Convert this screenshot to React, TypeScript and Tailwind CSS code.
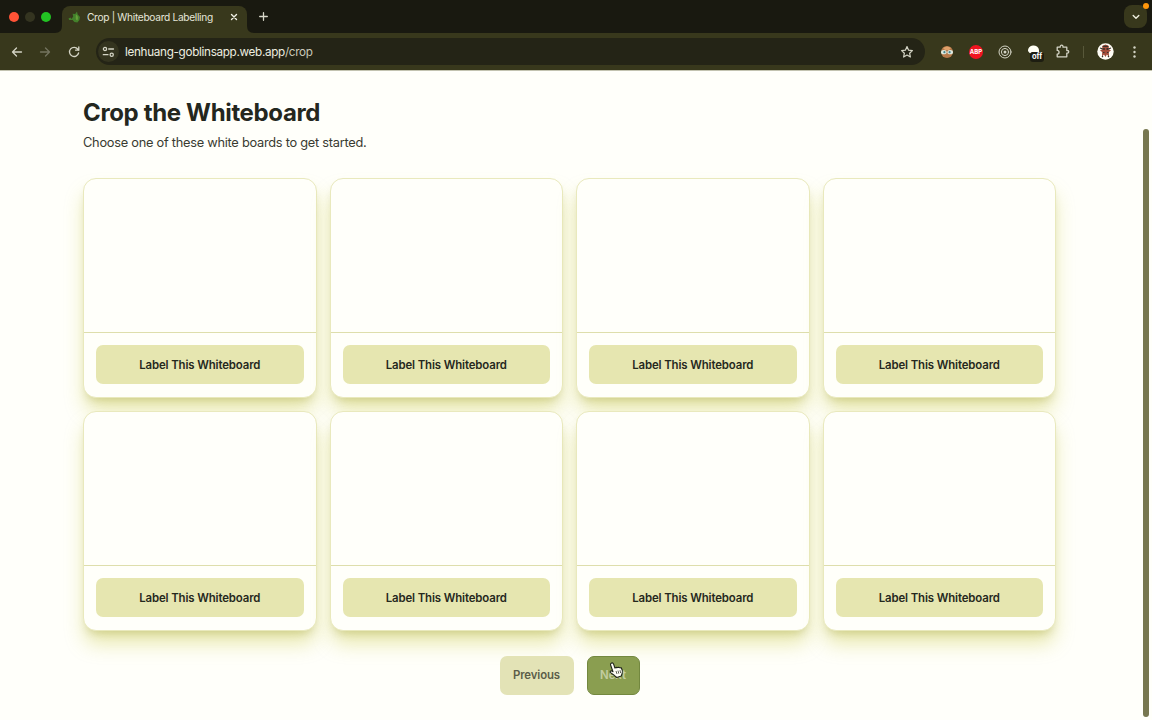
import React from "react";

const iconProps = {
  fill: "none",
  stroke: "currentColor",
  strokeLinecap: "round" as const,
  strokeLinejoin: "round" as const,
};

function TabStrip() {
  return (
    <div className="flex h-[33px] shrink-0 bg-[#191910] pl-[9px]">
      <div className="flex h-[33px] items-center gap-[6px]">
        <span className="size-[10px] rounded-full bg-[#ff5336]" />
        <span className="size-[10px] rounded-full bg-[#343420]" />
        <span className="size-[10px] rounded-full bg-[#22c323]" />
      </div>
      <div className="relative ml-[11px] mt-[6px] flex h-[27px] w-[185px] items-center rounded-t-[8px] bg-[#38381c] pb-[6px] pl-[6px]">
        <svg className="absolute bottom-0 -left-[7px]" width="7" height="7">
          <path d="M7 0V7H0Q7 7 7 0Z" fill="#38381c" />
        </svg>
        <svg className="absolute bottom-0 -right-[7px]" width="7" height="7">
          <path d="M0 0V7H7Q0 7 0 0Z" fill="#38381c" />
        </svg>
        <svg className="shrink-0" width="13" height="12" viewBox="0 0 13 12">
          <path d="M.5 7.5L2.5 6.5L3.5 8L5.2 5.4L4.6 2.8L7.2 3L9 .6L9.6 3.2L12 6L11.4 9L9.4 11.4L6.4 11L4.6 9L1.2 9Z" fill="#43802b" />
          <path d="M8 3.4Q11 5 9.4 9.6Q7 9 8 3.4Z" fill="#66a03a" />
        </svg>
        <span className="ml-[6px] w-[143px] shrink-0 whitespace-nowrap text-[10.2px] leading-[14px] tracking-[-0.32px] text-[#e5e5d9]">
          Crop | Whiteboard Labelling
        </span>
        <svg className="shrink-0 text-[#f0f0e5]" width="8" height="8" viewBox="0 0 8 8" {...iconProps} strokeWidth="1.4">
          <path d="M1.5 1.5L6.5 6.5M6.5 1.5L1.5 6.5" />
        </svg>
      </div>
      <svg className="ml-[12px] mt-[12px] text-[#d8d8ca]" width="9" height="9" viewBox="0 0 9 9" {...iconProps} strokeWidth="1.3">
        <path d="M4.5 .7V8.3M.7 4.5H8.3" />
      </svg>
      <div className="relative ml-auto mr-[5px] mt-[5px] flex size-[23px] items-center justify-center rounded-[8px] bg-[#38381c]">
        <svg width="8" height="6" viewBox="0 0 8 6" {...iconProps} strokeWidth="1.4" className="text-[#eeeede]">
          <path d="M1.2 1.5L4 4.3L6.8 1.5" />
        </svg>
        <span className="absolute -right-[2px] -top-[2px] size-[6px] rounded-full bg-[#ff960b]" />
      </div>
    </div>
  );
}

function Toolbar() {
  return (
    <div className="flex h-[37px] shrink-0 items-center bg-[#38381c] pl-[10px] text-[#d4d4c5] shadow-[0_1px_0_#c3c3b0]">
      <svg width="14" height="14" viewBox="0 0 14 14" {...iconProps} strokeWidth="1.3">
        <path d="M11.5 7H2.5M6.5 3L2.5 7L6.5 11" />
      </svg>
      <svg className="ml-[14px] text-[#74745f]" width="14" height="14" viewBox="0 0 14 14" {...iconProps} strokeWidth="1.3">
        <path d="M2.5 7H11.5M7.5 3L11.5 7L7.5 11" />
      </svg>
      <svg className="ml-[15px]" width="14" height="14" viewBox="0 0 14 14" {...iconProps} strokeWidth="1.3">
        <path d="M11.6 8A4.6 4.6 0 1 1 10.8 4.1L11.8 5.2M11.8 2V5.2H8.6" />
      </svg>
      <div className="ml-[15px] flex h-[27px] w-[829px] items-center rounded-full bg-[#242416] pl-[2px]">
        <span className="flex size-[21px] items-center justify-center rounded-full bg-[#34341f]">
          <svg width="13" height="12" viewBox="0 0 13 12" {...iconProps} strokeWidth="1.3">
            <circle cx="3" cy="3" r="1.6" />
            <path d="M6.7 3H11.5M1.3 8.7H6" />
            <circle cx="9.7" cy="8.7" r="1.6" />
          </svg>
        </span>
        <span className="ml-[6px] whitespace-nowrap text-[11.7px] leading-[18px] tracking-[-0.31px] text-[#eeeee0]">
          lenhuang-goblinsapp.web.app<span className="text-[#cacab9]">/crop</span>
        </span>
        <svg className="ml-auto mr-[11px]" width="14" height="14" viewBox="0 0 14 14" {...iconProps} strokeWidth="1.2">
          <path d="M7 1.6L8.6 5.2L12.4 5.6L9.6 8.2L10.4 12L7 10L3.6 12L4.4 8.2L1.6 5.6L5.4 5.2Z" />
        </svg>
      </div>
      <svg className="ml-[15px]" width="14" height="14" viewBox="0 0 14 14">
        <circle cx="7" cy="7" r="6" fill="#b5794a" />
        <path d="M3 3Q7 0 11 3L9 5H5Z" fill="#dfa16a" />
        <ellipse cx="3.8" cy="7.2" rx="2.8" ry="2.1" fill="#dce9df" />
        <ellipse cx="10.2" cy="7.2" rx="2.8" ry="2.1" fill="#dce9df" />
        <circle cx="4.4" cy="7.2" r="1.1" fill="#45828a" />
        <circle cx="9.6" cy="7.2" r="1.1" fill="#45828a" />
      </svg>
      <span className="ml-[15px] flex size-[14px] items-center justify-center rounded-full bg-[#f01420] text-[6px] font-bold leading-none text-white">ABP</span>
      <svg className="ml-[15px]" width="14" height="14" viewBox="0 0 14 14" {...iconProps} strokeWidth="1">
        <circle cx="7" cy="7" r="6" />
        <circle cx="7" cy="7" r="3.6" />
        <circle cx="7" cy="7" r="1.5" fill="currentColor" stroke="none" />
      </svg>
      <span className="relative ml-[15px] size-[16px]">
        <svg width="16" height="16" viewBox="0 0 16 16">
          <path d="M1 7A5.5 5 0 0 1 12 6V8H5Q3.5 11 1 7Z" fill="#fffff5" />
        </svg>
        <span className="absolute left-[3px] top-[8px] rounded-[3px] bg-[#1d1d11] px-[2px] text-[7.5px] font-bold leading-[10px] text-white">off</span>
      </span>
      <svg className="ml-[12px]" width="16" height="16" viewBox="0 0 16 16" {...iconProps} strokeWidth="1.3">
        <path d="M2.2 3.2H5.2V2.6A1.4 1.4 0 0 1 8 2.6V3.2H11.8V6.5H12.4A1.3 1.3 0 0 1 12.4 9.2H11.8V12.8H2.2V10.1A1.8 1.8 0 0 0 2.2 6.4Z" />
      </svg>
      <span className="ml-[12px] h-[12px] w-px bg-[#58583a]" />
      <svg className="ml-[13px]" width="17" height="17" viewBox="0 0 17 17">
        <circle cx="8.5" cy="8.5" r="8.2" fill="#fffdf5" />
        <path d="M5 3L8.5 1.5L12 3L11.5 6L14 7.5L11.8 9L12 13.5L9.8 11.5L8.5 14L7 11.5L5 13.5L5.2 9L3 7.5L5.6 6Z" fill="#a34c39" />
        <path d="M6 3.4H11M3 5L6 6M14 5L11 6M6 9.5H7.5M10 9.5H11.5M6 13L5 14M11 13L12 14" stroke="#38332d" strokeWidth="1.2" />
        <circle cx="7" cy="6" r=".9" fill="#342c27" />
        <circle cx="10.3" cy="6" r=".9" fill="#342c27" />
      </svg>
      <svg className="ml-[15px] shrink-0" width="12" height="14" fill="currentColor">
        <circle cx="5.5" cy="2.5" r="1.2" />
        <circle cx="5.5" cy="7" r="1.2" />
        <circle cx="5.5" cy="11.5" r="1.2" />
      </svg>
    </div>
  );
}

function BoardCard() {
  return (
    <article className="flex h-[220px] flex-col overflow-hidden rounded-[13px] border border-[#e9e9bd] bg-[#fffffa] shadow-[0_14px_20px_-2px_rgba(190,190,30,0.36),0_6px_8px_-4px_rgba(120,120,50,0.30)]">
      <div className="h-[154px] shrink-0 border-b border-[#dedeac]" />
      <div className="px-[12px] pt-[12px]">
        <button className="block h-[39px] w-full rounded-[7px] bg-[#e6e6b0] pt-[2px] text-[11.4px] font-semibold tracking-[-0.12px] text-[#25281d]">
          Label This Whiteboard
        </button>
      </div>
    </article>
  );
}

function HandPointer() {
  return (
    <svg className="absolute left-[21px] top-[5px]" width="15" height="17" viewBox="0 0 15 17">
      <path
        d="M2.2 1.2C3.3 .5 4.3 1.2 4.7 2.4L5.9 6L7 5.4L8.3 5.6L9.5 5.2L10.8 5.7L12.3 5.9C13.2 7.4 13.8 9.5 13.2 11.1L12.3 14L7.8 15.5L5.2 13.3L1.5 10.6C.7 9.6 1.7 8.5 2.9 9L4 9.7L1.6 3C1.3 2.2 1.5 1.5 2.2 1.2Z"
        fill="#fffff8"
        stroke="#20251b"
        strokeWidth="1.1"
        strokeLinejoin="round"
      />
      <path d="M7 9L8 12M9 8.6L9.8 11.6M11 8.2L11.6 11" stroke="#33372c" strokeWidth=".8" />
    </svg>
  );
}

export default function App() {
  return (
    <div className="flex h-[720px] w-[1152px] flex-col overflow-hidden bg-[#fffffa] font-['Inter',sans-serif]">
      <TabStrip />
      <Toolbar />
      <div className="flex min-h-0 flex-1">
        <main className="flex-1 pl-[83px] pt-[27px] text-[#24271e]">
          <h1 className="text-[24px] font-bold leading-[32px] tracking-[-0.35px]">Crop the Whiteboard</h1>
          <p className="mt-[4px] text-[12.8px] leading-[20px] tracking-[-0.26px] text-[#393b31]">Choose one of these white boards to get started.</p>
          <div className="mt-[25px] grid w-[973px] grid-cols-4 gap-[13px]">
            {Array.from({ length: 8 }, (_, index) => (
              <BoardCard key={index} />
            ))}
          </div>
          <nav className="mt-[25px] flex w-[973px] justify-center gap-[13px]">
            <button className="h-[39px] w-[74px] rounded-[7px] bg-[#e3e3b6] pt-px text-[11.4px] font-semibold tracking-[-0.12px] text-[#5b5d49]">Previous</button>
            <button className="relative h-[39px] w-[53px] rounded-[7px] border border-[#73883f] bg-[#8a9e50] text-[11.4px] font-semibold text-[#c3cda0]">
              Next
              <HandPointer />
            </button>
          </nav>
        </main>
        <div className="w-[9px] pt-[59px]">
          <div className="h-[588px] w-[6px] rounded-full bg-[#777750]" />
        </div>
      </div>
    </div>
  );
}
